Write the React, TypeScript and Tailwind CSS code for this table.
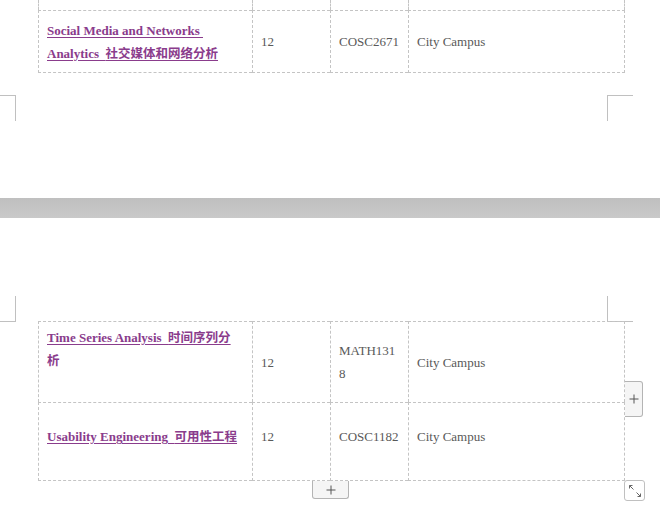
const link = "text-[#8a3c8c] font-bold underline decoration-[#8a3c8c] underline-offset-[2px]";
const plain = "text-[#8a3c8c] font-bold";
const cjk = "font-['Noto_Sans_CJK_SC',sans-serif] text-[12.5px] leading-[13px]";
const gray = "text-[#595959]";
const cell = "border-l border-t border-dashed border-[#c4c4c4] flex items-center pl-2";
const cols = "grid grid-cols-[214px_78px_78px_217px]";

function PlusIcon() {
  return (
    <svg width="10" height="10" viewBox="0 0 10 10">
      <path d="M5 0.5v9M0.5 5h9" stroke="#555" strokeWidth="1" />
    </svg>
  );
}

function ResizeIcon() {
  return (
    <svg width="14" height="14" viewBox="0 0 14 14" fill="none" stroke="#666" strokeWidth="1">
      <path d="M1.5 1.5l4 4M1.5 1.5h3M1.5 1.5v3" />
      <path d="M12.5 12.5l-4-4M12.5 12.5h-3M12.5 12.5v-3" />
    </svg>
  );
}

function TopMarks() {
  return (
    <div className="flex">
      <div className="w-[16px] h-[26px] border-t border-r border-[#c0c0c0]" />
      <div className="ml-[591px] w-[26px] h-[26px] border-t border-l border-[#c0c0c0]" />
    </div>
  );
}

function BottomMarks() {
  return (
    <div className="flex">
      <div className="w-[16px] h-[26px] border-b border-r border-[#c0c0c0]" />
      <div className="ml-[591px] w-[26px] h-[26px] border-b border-l border-[#c0c0c0]" />
    </div>
  );
}

export default function App() {
  return (
    <div className="w-[660px] h-[508px] overflow-hidden bg-white font-['Liberation_Serif','Noto_Sans_CJK_SC',serif] text-[13px] leading-[23px]">
      {/* first page tail */}
      <div className="h-[198px]">
        <div className="ml-[38px] w-[587px]">
          <div className={cols + " h-[10px]"}>
            <div className="border-l border-dashed border-[#c4c4c4]" />
            <div className="border-l border-dashed border-[#c4c4c4]" />
            <div className="border-l border-dashed border-[#c4c4c4]" />
            <div className="border-l border-r border-dashed border-[#c4c4c4]" />
          </div>
          <div className={cols + " h-[63px]"}>
            <div className={cell + " border-b"}>
              <div className="whitespace-nowrap">
                <span className={link}>Social Media and Networks&nbsp;</span>
                <br />
                <span className={link}>
                  Analytics&nbsp; <span className={cjk}>社交媒体和网络分析</span>
                </span>
              </div>
            </div>
            <div className={cell + " border-b " + gray}>12</div>
            <div className={cell + " border-b " + gray}>COSC2671</div>
            <div className={cell + " border-b border-r " + gray}>City Campus</div>
          </div>
        </div>
        <div className="mt-[22px]">
          <TopMarks />
        </div>
      </div>

      {/* page gap */}
      <div className="h-[20px] bg-[linear-gradient(#bfbfbf,#c9c9c9)]" />

      {/* second page */}
      <div className="h-[290px]">
        <div className="pt-[78px]">
          <BottomMarks />
        </div>
        <div className="relative -mt-px ml-[38px] w-[587px]">
          <div className={cols + " h-[81px]"}>
            <div className="border-l border-t border-dashed border-[#c4c4c4] pl-2 pt-[4px]">
              <div className="whitespace-nowrap">
                <span className={link}>
                  Time Series Analysis&nbsp; <span className={cjk}>时间序列分</span>
                </span>
                <br />
                <span className={plain}>
                  <span className={cjk}>析</span>
                </span>
              </div>
            </div>
            <div className={cell + " " + gray}>12</div>
            <div className={cell + " " + gray}>
              <div>
                MATH131
                <br />8
              </div>
            </div>
            <div className={cell + " border-r " + gray}>City Campus</div>
          </div>
          <div className={cols + " h-[79px]"}>
            <div className={cell + " border-b pb-[10px]"}>
              <span className={link + " whitespace-nowrap"}>
                Usability Engineering&nbsp; <span className={cjk}>可用性工程</span>
              </span>
            </div>
            <div className={cell + " border-b pb-[10px] " + gray}>12</div>
            <div className={cell + " border-b pb-[10px] " + gray}>COSC1182</div>
            <div className={cell + " border-b border-r pb-[10px] " + gray}>City Campus</div>
          </div>

          {/* table controls */}
          <div className="absolute left-[587px] top-[60px] w-[18px] h-[36px] bg-[#f5f5f5] border border-l-0 border-[#b4b4b4] rounded-r-[3px] flex items-center justify-center">
            <PlusIcon />
          </div>
          <div className="absolute left-[274px] top-[160px] w-[37px] h-[18px] bg-[#f5f5f5] border border-t-0 border-[#b4b4b4] rounded-b-[3px] flex items-center justify-center">
            <PlusIcon />
          </div>
          <div className="absolute left-[586px] top-[159px] w-[21px] h-[21px] bg-white border border-[#c0c0c0] rounded-[3px] flex items-center justify-center">
            <ResizeIcon />
          </div>
        </div>
      </div>
    </div>
  );
}
